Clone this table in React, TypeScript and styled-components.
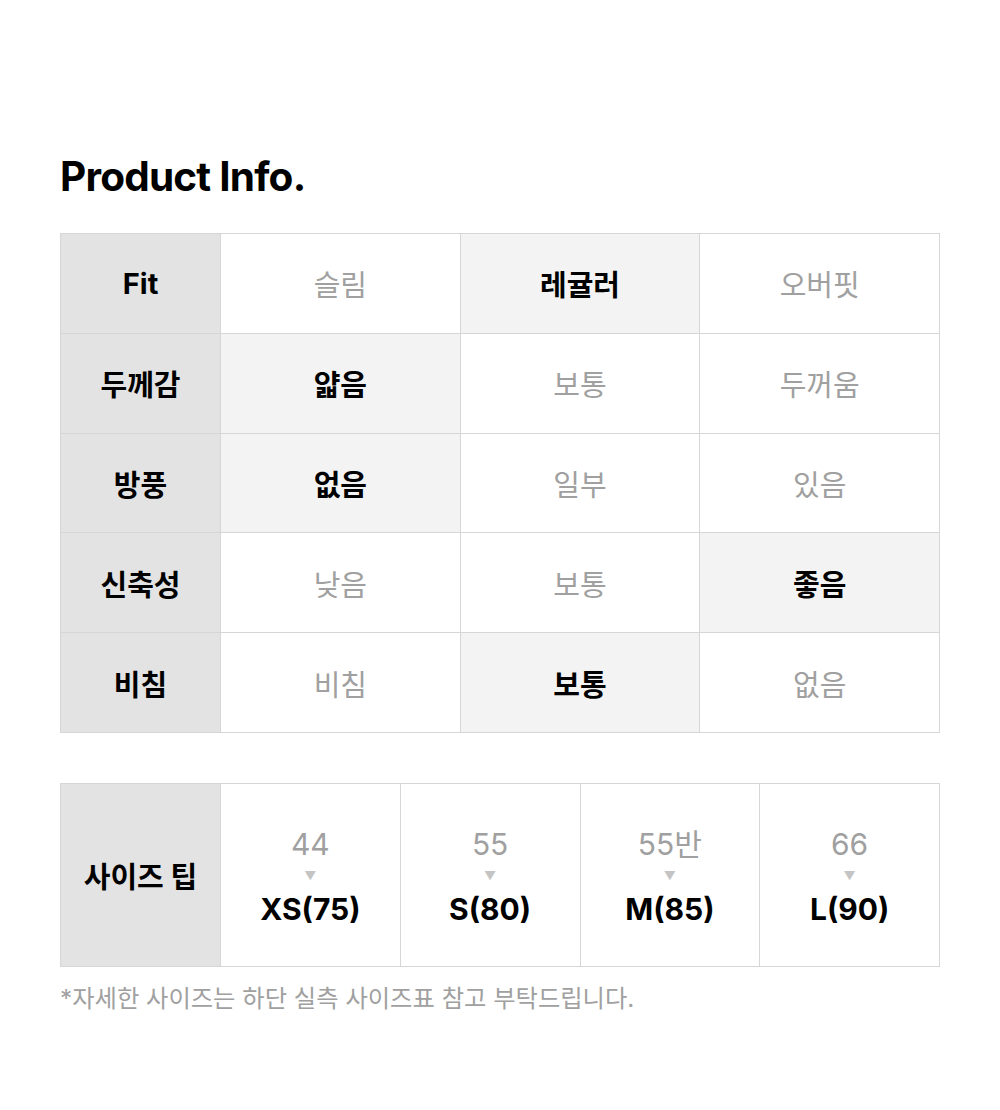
import React from 'react';
import styled, { createGlobalStyle } from 'styled-components';

const GlobalStyle = createGlobalStyle`
  html, body {
    margin: 0;
    padding: 0;
    background: #ffffff;
  }
  body {
    font-family: 'Inter', 'Noto Sans CJK KR', sans-serif;
  }
`;

const Page = styled.main`
  width: 1000px;
  box-sizing: border-box;
  padding: 152px 60px 0;
`;

const Title = styled.h1`
  margin: 0 0 31px;
  font-size: 40.5px;
  font-weight: 700;
  line-height: 50px;
  letter-spacing: -0.8px;
  color: #000;
`;

const Grid = styled.div<{ $cols: number; $rows: number; $height: number }>`
  display: grid;
  grid-template-columns: 159px repeat(${({ $cols }) => $cols}, 1fr);
  grid-template-rows: repeat(${({ $rows }) => $rows}, 1fr);
  gap: 1px;
  width: 880px;
  height: ${({ $height }) => $height}px;
  box-sizing: border-box;
  padding: 1px;
  background: #d6d6d6;
`;

const LabelCell = styled.div`
  display: flex;
  align-items: center;
  justify-content: center;
  background: #e3e3e3;
  font-size: 29px;
  font-weight: 700;
  color: #000;
`;

const ValueCell = styled.div<{ $active?: boolean }>`
  display: flex;
  align-items: center;
  justify-content: center;
  background: ${({ $active }) => ($active ? '#f3f3f3' : '#ffffff')};
  font-size: 29px;
  font-weight: ${({ $active }) => ($active ? 700 : 400)};
  color: ${({ $active }) => ($active ? '#000' : '#a0a0a0')};
`;

const SizeSection = styled.div`
  margin-top: 50px;
`;

const SizeCell = styled.div`
  display: flex;
  flex-direction: column;
  align-items: center;
  justify-content: center;
  padding-top: 4px;
  background: #fff;
`;

const KSize = styled.span`
  font-size: 30px;
  line-height: 36px;
  color: #a0a0a0;
`;

const Arrow = styled.span`
  font-size: 12px;
  line-height: 28px;
  color: #c4c4c4;
`;

const IntlSize = styled.span`
  font-size: 30px;
  line-height: 38px;
  font-weight: 700;
  color: #000;
`;

const Note = styled.p`
  margin: 12px 0 0;
  font-size: 24.3px;
  color: #a0a0a0;
`;

const rows = [
  { label: 'Fit', values: ['슬림', '레귤러', '오버핏'], active: 1 },
  { label: '두께감', values: ['얇음', '보통', '두꺼움'], active: 0 },
  { label: '방풍', values: ['없음', '일부', '있음'], active: 0 },
  { label: '신축성', values: ['낮음', '보통', '좋음'], active: 2 },
  { label: '비침', values: ['비침', '보통', '없음'], active: 1 },
];

const sizes = [
  { kr: '44', intl: 'XS(75)' },
  { kr: '55', intl: 'S(80)' },
  { kr: '55반', intl: 'M(85)' },
  { kr: '66', intl: 'L(90)' },
];

export default function App() {
  return (
    <>
      <GlobalStyle />
      <Page>
        <Title>Product Info.</Title>

        <Grid $cols={3} $rows={5} $height={500}>
          {rows.map((row) => (
            <React.Fragment key={row.label}>
              <LabelCell>{row.label}</LabelCell>
              {row.values.map((v, i) => (
                <ValueCell key={i} $active={i === row.active}>
                  {v}
                </ValueCell>
              ))}
            </React.Fragment>
          ))}
        </Grid>

        <SizeSection>
          <Grid $cols={4} $rows={1} $height={184}>
            <LabelCell>사이즈 팁</LabelCell>
            {sizes.map((s) => (
              <SizeCell key={s.intl}>
                <KSize>{s.kr}</KSize>
                <Arrow>▼</Arrow>
                <IntlSize>{s.intl}</IntlSize>
              </SizeCell>
            ))}
          </Grid>
          <Note>*자세한 사이즈는 하단 실측 사이즈표 참고 부탁드립니다.</Note>
        </SizeSection>
      </Page>
    </>
  );
}
